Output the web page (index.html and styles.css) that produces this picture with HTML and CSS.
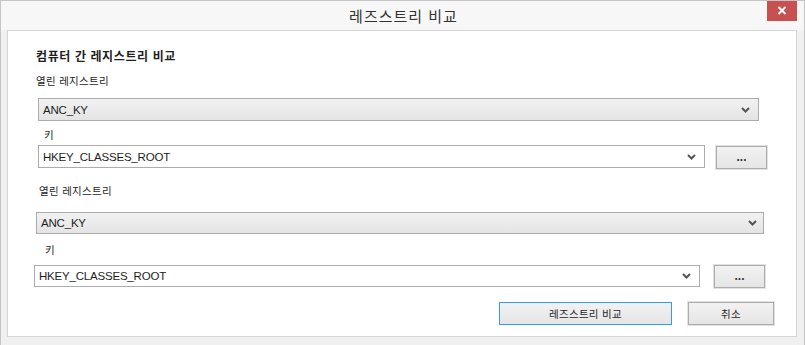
FILE: index.html
```html
<!DOCTYPE html>
<html lang="ko">
<head>
  <meta charset="UTF-8">
  <title>레즈스트리 비교</title>
  <link rel="stylesheet" href="styles.css">
</head>
<body>
  <div class="window">
    <div class="titlebar">
      <span class="title">레즈스트리 비교</span>
      <div class="close">
        <svg width="10" height="9" viewBox="0 0 10 9"><path d="M1.5 1 L8.5 8 M8.5 1 L1.5 8" stroke="#fff" stroke-width="2"/></svg>
      </div>
    </div>

    <div class="panel">
      <div class="heading">컴퓨터 간 레지스트리 비교</div>

      <!-- Premier registre -->
      <div class="label label-1">열린 레지스트리</div>
      <div class="select select-1">
        <span>ANC_KY</span>
        <svg class="chev" width="9" height="6" viewBox="0 0 9 6"><path d="M1 1 L4.5 4.5 L8 1" fill="none" stroke="#555" stroke-width="2"/></svg>
      </div>
      <div class="label key key-1">키</div>
      <div class="row row-2">
        <div class="combo combo-2">
          <span>HKEY_CLASSES_ROOT</span>
          <svg class="chev" width="9" height="6" viewBox="0 0 9 6"><path d="M1 1 L4.5 4.5 L8 1" fill="none" stroke="#555" stroke-width="2"/></svg>
        </div>
        <div class="browse browse-2">...</div>
      </div>

      <!-- Deuxième registre -->
      <div class="label label-2">열린 레지스트리</div>
      <div class="select select-3">
        <span>ANC_KY</span>
        <svg class="chev" width="9" height="6" viewBox="0 0 9 6"><path d="M1 1 L4.5 4.5 L8 1" fill="none" stroke="#555" stroke-width="2"/></svg>
      </div>
      <div class="label key key-2">키</div>
      <div class="row row-4">
        <div class="combo combo-4">
          <span>HKEY_CLASSES_ROOT</span>
          <svg class="chev" width="9" height="6" viewBox="0 0 9 6"><path d="M1 1 L4.5 4.5 L8 1" fill="none" stroke="#555" stroke-width="2"/></svg>
        </div>
        <div class="browse browse-4">...</div>
      </div>

      <div class="actions">
        <div class="btn btn-default">레즈스트리 비교</div>
        <div class="btn btn-cancel">취소</div>
      </div>
    </div>
  </div>
</body>
</html>
```

FILE: styles.css
```css
* {
  box-sizing: border-box;
}

body {
  margin: 0;
  font-family: "Liberation Sans", "Noto Sans CJK KR", sans-serif;
  color: #1e1e1e;
}

.window {
  width: 805px;
  height: 345px;
  background: #f0f0f0;
  border: 1px solid #c6c6c6;
  border-bottom: none;
  overflow: hidden;
}

.titlebar {
  height: 29px;
  background: #f7f7f7;
  display: flex;
  align-items: center;
  justify-content: center;
  position: relative;
}

.title {
  font-family: "Noto Sans CJK KR", sans-serif;
  font-size: 15px;
  letter-spacing: 1px;
  color: #333;
  margin-left: 2px;
}

.close {
  position: absolute;
  top: -1px;
  right: 7px;
  width: 30px;
  height: 21px;
  background: #c75050;
  display: flex;
  align-items: center;
  justify-content: center;
}

.panel {
  margin: 0 7px 0 6px;
  height: 307px;
  background: #fff;
  border: 1px solid #d5d5d5;
  padding: 0 22px 0 26px;
}

.heading,
.label {
  font-family: "Noto Sans CJK KR", sans-serif;
  height: 14px;
  line-height: 14px;
}

.heading {
  font-size: 12px;
  font-weight: bold;
  letter-spacing: 0.6px;
  margin: 18px 0 0 2px;
}

.label {
  font-size: 10.5px;
  letter-spacing: 0.3px;
}

.label-1 { margin: 11px 0 0 2px; }
.key-1 { margin: 7px 0 0 10px; }
.label-2 { margin: 15px 0 0 5px; }
.key-2 { margin: 9px 0 0 11px; }

.select,
.combo {
  display: flex;
  align-items: center;
  justify-content: space-between;
  border: 1px solid #acacac;
  font-size: 11.5px;
  letter-spacing: -0.2px;
  padding: 0 8px 0 4px;
}

.select {
  background: linear-gradient(#f2f2f2, #e4e4e4);
}

.combo {
  background: #fff;
}

.select-1 {
  margin: 10px 0 0 4px;
  width: 721px;
  height: 23px;
}

.select-3 {
  margin: 14px 0 0 2px;
  width: 728px;
  height: 22px;
  padding-right: 6px;
}

.row {
  display: flex;
  align-items: flex-start;
}

.row-2 {
  margin: 3px 0 0 4px;
}

.row-4 {
  margin: 8px 0 0 0;
}

.combo-2 {
  width: 667px;
  height: 23px;
}

.combo-4 {
  width: 666px;
  height: 22px;
}

.browse {
  width: 51px;
  height: 23px;
  border: 1px solid #acacac;
  outline: 1px solid #e2e2e2;
  background: linear-gradient(#f2f2f2, #e5e5e5);
  font-size: 12px;
  font-weight: bold;
  color: #333;
  display: flex;
  align-items: center;
  justify-content: center;
  padding-bottom: 2px;
}

.browse-2 {
  margin: 1px 0 0 11px;
}

.browse-4 {
  margin-left: 14px;
}

.actions {
  margin-top: 14px;
  display: flex;
  justify-content: flex-end;
  gap: 16px;
}

.btn {
  height: 23px;
  font-family: "Noto Sans CJK KR", sans-serif;
  font-size: 10.5px;
  letter-spacing: 0.3px;
  background: linear-gradient(#f2f2f2, #e5e5e5);
  display: flex;
  align-items: center;
  justify-content: center;
}

.btn-default {
  width: 173px;
  border: 1px solid #3399ff;
}

.btn-cancel {
  width: 86px;
  border: 1px solid #acacac;
  outline: 1px solid #e2e2e2;
}
```
